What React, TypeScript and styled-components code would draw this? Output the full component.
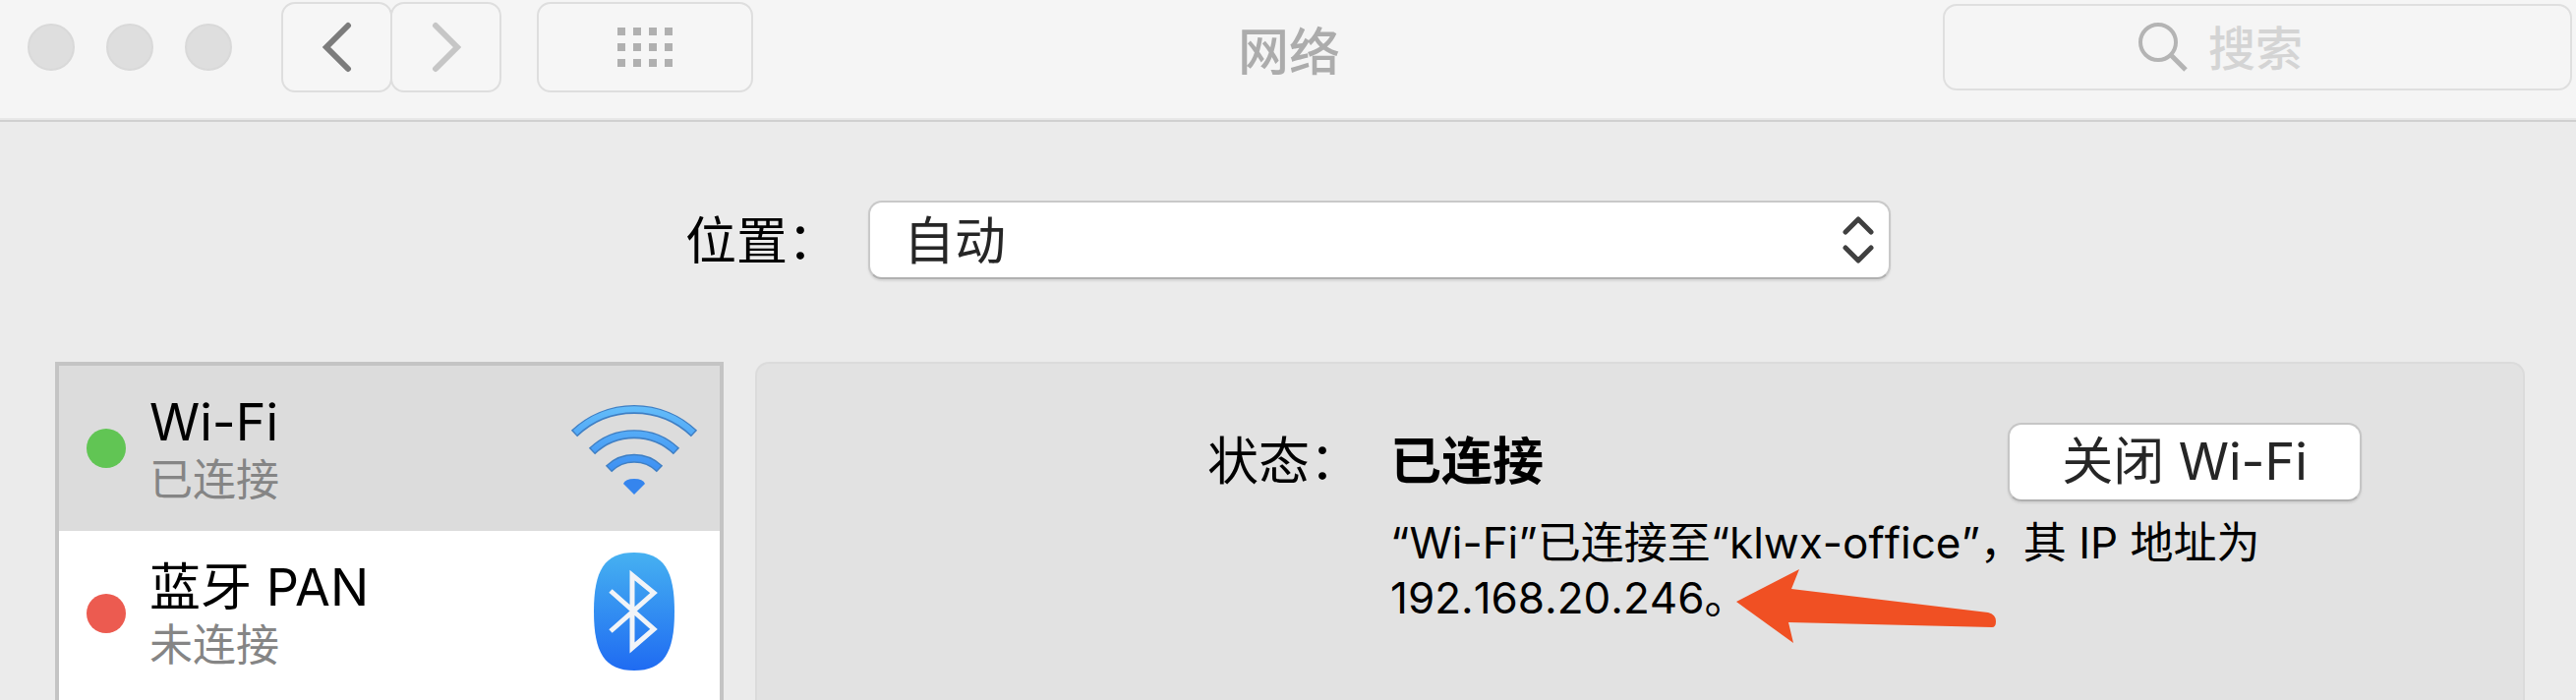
import React from "react";
import styled, { createGlobalStyle } from "styled-components";

const Global = createGlobalStyle`
  *, *::before, *::after { box-sizing: border-box; }
  body { margin: 0; background: #ebebeb; }
  body, button, input, select {
    font-family: Inter, "Noto Sans CJK SC", sans-serif;
    font-size: 52px;
    line-height: 60px;
    color: #000;
  }
`;

const Window = styled.div`
  min-height: 100vh;
  display: flex;
  flex-direction: column;
  overflow: hidden;
`;

const TitleBar = styled.header`
  display: grid;
  grid-template-columns: 1fr auto 1fr;
  align-items: start;
  height: 124px;
  padding: 2px 4px 0 28px;
  background: #f5f5f5;
  border-bottom: 2px solid #d0d0d0;
  box-shadow: inset 0 -2px #e8e8e8;
`;

const Controls = styled.div`
  display: flex;
  align-items: center;
  height: 92px;
`;

const Lights = styled.div`
  display: flex;
  gap: 32px;
  margin-right: 50px;
`;

const Light = styled.button`
  width: 48px;
  height: 48px;
  padding: 0;
  border: 2px solid #d9d9d9;
  border-radius: 50%;
  background: #dedede;
`;

const ToolButton = styled.button<{ $width: number }>`
  display: flex;
  align-items: center;
  justify-content: center;
  width: ${(p) => p.$width}px;
  height: 92px;
  padding: 0;
  border: 2px solid #dedede;
  border-radius: 14px;
  background: #f6f6f6;
`;

const NavGroup = styled.div`
  display: flex;
  margin-right: 36px;
  & > * + * { margin-left: -2px; }
`;

const Title = styled.h1`
  margin: 0;
  padding: 22px 22px 0 0;
  font-size: 52px;
  font-weight: 500;
  line-height: 60px;
  color: #acacac;
`;

const Search = styled.label`
  justify-self: end;
  display: flex;
  align-items: center;
  gap: 20px;
  width: 640px;
  height: 88px;
  margin-top: 2px;
  padding-left: 196px;
  border: 2px solid #dfdfdf;
  border-radius: 14px;
`;

const SearchInput = styled.input`
  flex: 1;
  min-width: 0;
  padding: 4px 0 0;
  border: 0;
  outline: 0;
  background: transparent;
  font-size: 48px;
  font-weight: 500;
  &::placeholder { color: #d4d4d4; opacity: 1; }
`;

const LocationRow = styled.div`
  display: flex;
  align-items: center;
  justify-content: center;
  gap: 30px;
  margin-top: 80px;
`;

const LocationLabel = styled.label`
  padding-top: 4px;
`;

const SelectBox = styled.div`
  position: relative;
  width: 1040px;
`;

const Select = styled.select`
  appearance: none;
  display: block;
  width: 100%;
  height: 80px;
  padding: 4px 80px 0 34px;
  border: 2px solid #c9c9c9;
  border-bottom-color: #b0b0b0;
  border-radius: 14px;
  background: #fff;
  box-shadow: 0 2px 2px #d6d6d6;
  color: #262626;
`;

const SelectArrows = styled.svg`
  position: absolute;
  right: 16px;
  top: 14px;
  pointer-events: none;
`;

const Main = styled.main`
  flex: 1;
  display: flex;
  gap: 32px;
  margin-top: 84px;
  padding: 0 52px 0 56px;
`;

const ServiceList = styled.ul`
  flex: none;
  width: 680px;
  margin: 0;
  padding: 0;
  list-style: none;
  border: 4px solid #c4c4c4;
  border-bottom: 0;
  background: #fff;
`;

const Service = styled.li<{ $selected?: boolean }>`
  display: flex;
  align-items: center;
  gap: 24px;
  height: 168px;
  padding: 0 22px 0 28px;
  background: ${(p) => (p.$selected ? "#dcdcdc" : "#fff")};
`;

const Dot = styled.span<{ $color: string }>`
  width: 40px;
  height: 40px;
  border-radius: 50%;
  background: ${(p) => p.$color};
`;

const ServiceText = styled.div`
  flex: 1;
  padding-top: 4px;
`;

const ServiceName = styled.div`
  line-height: 60px;
`;

const ServiceState = styled.div`
  font-size: 44px;
  line-height: 56px;
  color: #858585;
`;

const IconCell = styled.div`
  display: flex;
  justify-content: center;
  width: 130px;
`;

const Panel = styled.section`
  flex: 1;
  display: flex;
  align-items: flex-start;
  padding: 60px 0 0 458px;
  border: 2px solid #dbdbdb;
  border-bottom: 0;
  border-radius: 14px 14px 0 0;
  background: #e2e2e2;
`;

const StatusLabel = styled.div`
  flex: none;
  width: 186px;
  padding-top: 10px;
`;

const StatusBody = styled.div`
  width: 988px;
`;

const StatusHead = styled.div`
  display: flex;
  align-items: center;
  justify-content: space-between;
`;

const Action = styled.button`
  width: 360px;
  height: 80px;
  padding: 0;
  border: 2px solid #c6c6c6;
  border-bottom-color: #b0b0b0;
  border-radius: 14px;
  background: #fff;
  box-shadow: 0 2px 2px #cfcfcf;
  color: #262626;
`;

const Detail = styled.p`
  position: relative;
  margin: 14px 0 0;
  font-size: 44px;
  font-kerning: none;
  line-height: 56px;
`;

const Arrow = styled.svg`
  position: absolute;
  left: 352px;
  top: 54px;
`;

const WifiIcon = () => (
  <svg width="130" height="94" viewBox="0 0 130 94" aria-hidden="true">
    <defs>
      <linearGradient id="wifi" x1="0" y1="0" x2="0" y2="94" gradientUnits="userSpaceOnUse">
        <stop offset="0" stopColor="#66c0fa" />
        <stop offset="1" stopColor="#2f7ff0" />
      </linearGradient>
    </defs>
    <g fill="none" strokeWidth="9" stroke="#3f7fc4">
      <path d="M4 32 A88 88 0 0 1 126 32" />
      <path d="M22 50 A62 62 0 0 1 108 50" />
      <path d="M39 68 A37 37 0 0 1 91 68" />
    </g>
    <g fill="none" strokeWidth="6" stroke="url(#wifi)">
      <path d="M5 31 A88 88 0 0 1 125 31" />
      <path d="M23 49 A62 62 0 0 1 107 49" />
      <path d="M40 67 A37 37 0 0 1 90 67" />
    </g>
    <path d="M54 83 Q56 78 65 78 Q74 78 76 83 L65 94 Z" fill="#3585ee" />
  </svg>
);

const BluetoothIcon = () => (
  <svg width="82" height="124" viewBox="0 0 82 124" aria-hidden="true">
    <defs>
      <linearGradient id="bt" x1="0" y1="0" x2="0" y2="1">
        <stop offset="0" stopColor="#46b1f1" />
        <stop offset="1" stopColor="#1f6bf2" />
      </linearGradient>
    </defs>
    <path d="M41 0 C71 0 82 18 82 60 C82 102 71 120 41 120 C11 120 0 102 0 60 C0 18 11 0 41 0 Z" fill="url(#bt)" />
    <path d="M17 39 L61 78 L39 97 V23 L61 41 L17 80" fill="none" stroke="#f1f4f8" strokeWidth="5" />
  </svg>
);

export default function App() {
  return (
    <Window>
      <Global />
      <TitleBar>
        <Controls>
          <Lights>
            <Light aria-label="关闭" />
            <Light aria-label="最小化" />
            <Light aria-label="缩放" />
          </Lights>
          <NavGroup>
            <ToolButton $width={113} aria-label="后退">
              <svg width="32" height="52" viewBox="0 0 32 52">
                <path d="M27 4 L5 26 L27 48" fill="none" stroke="#7c7c7c" strokeWidth="6" strokeLinecap="round" />
              </svg>
            </ToolButton>
            <ToolButton $width={113} aria-label="前进">
              <svg width="32" height="52" viewBox="0 0 32 52">
                <path d="M5 4 L27 26 L5 48" fill="none" stroke="#c6c6c6" strokeWidth="6" strokeLinecap="round" />
              </svg>
            </ToolButton>
          </NavGroup>
          <ToolButton $width={220} aria-label="显示全部">
            <svg width="56" height="40" viewBox="0 0 56 40" fill="#b0b0b0">
              {[0, 16, 32].map((y) =>
                [0, 16, 32, 48].map((x) => <rect key={`${x}-${y}`} x={x} y={y} width="8" height="8" />)
              )}
            </svg>
          </ToolButton>
        </Controls>
        <Title>网络</Title>
        <Search>
          <svg width="52" height="52" viewBox="0 0 52 52" fill="none" stroke="#b4b4b4" strokeWidth="4" aria-hidden="true">
            <circle cx="21" cy="21" r="18" />
            <path d="M34 34 L49 49" strokeWidth="5" />
          </svg>
          <SearchInput type="text" placeholder="搜索" aria-label="搜索" />
        </Search>
      </TitleBar>

      <LocationRow>
        <LocationLabel htmlFor="location">位置：</LocationLabel>
        <SelectBox>
          <Select id="location" defaultValue="auto">
            <option value="auto">自动</option>
          </Select>
          <SelectArrows width="34" height="52" viewBox="0 0 34 52" aria-hidden="true">
            <path d="M4 18 L17 5 L30 18 M4 34 L17 47 L30 34" fill="none" stroke="#404040" strokeWidth="5" strokeLinecap="round" strokeLinejoin="round" />
          </SelectArrows>
        </SelectBox>
      </LocationRow>

      <Main>
        <ServiceList>
          <Service $selected>
            <Dot $color="#61c554" />
            <ServiceText>
              <ServiceName>Wi-Fi</ServiceName>
              <ServiceState>已连接</ServiceState>
            </ServiceText>
            <IconCell><WifiIcon /></IconCell>
          </Service>
          <Service>
            <Dot $color="#ec5b50" />
            <ServiceText>
              <ServiceName>蓝牙 PAN</ServiceName>
              <ServiceState>未连接</ServiceState>
            </ServiceText>
            <IconCell><BluetoothIcon /></IconCell>
          </Service>
        </ServiceList>

        <Panel>
          <StatusLabel>状态：</StatusLabel>
          <StatusBody>
            <StatusHead>
              <strong>已连接</strong>
              <Action>关闭 Wi-Fi</Action>
            </StatusHead>
            <Detail>
              “Wi-Fi”已连接至“klwx-office”，其 IP 地址为
              <br />
              192.168.20.246。
              <Arrow width="266" height="78" viewBox="0 0 266 78" aria-hidden="true">
                <path d="M0 34 L64 1 L56 21 L256 45 Q264 47 264 54 Q264 60 260 60 L53 55 L58 76 Z" fill="#f05023" />
              </Arrow>
            </Detail>
          </StatusBody>
        </Panel>
      </Main>
    </Window>
  );
}
